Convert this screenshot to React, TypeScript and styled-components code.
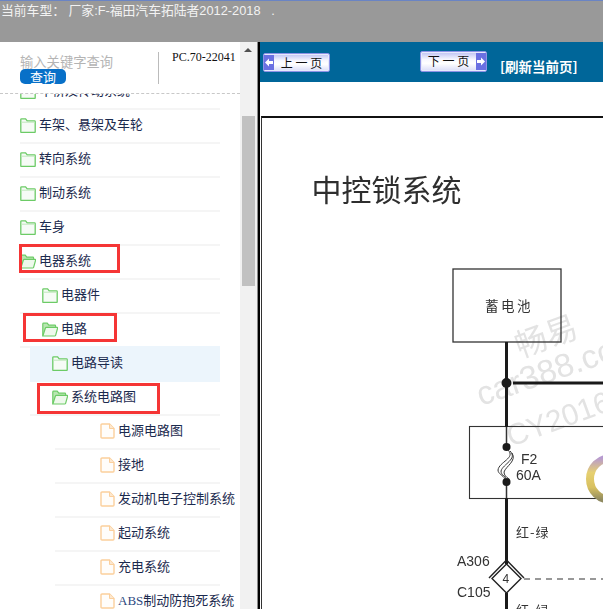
import React from "react";
import styled, { createGlobalStyle } from "styled-components";

const CJK = `"Noto Sans CJK SC", "Liberation Sans", sans-serif`;

const Global = createGlobalStyle`
  html, body { margin: 0; padding: 0; background: #fff; overflow: hidden; }
  * { box-sizing: border-box; }
`;

const Page = styled.div`
  width: 603px;
  height: 609px;
  display: flex;
  flex-direction: column;
  overflow: hidden;
  font-family: ${CJK};
`;

const TopBar = styled.header`
  flex: 0 0 42px;
  background: #999;
  border-top: 1px solid #6a84c4;
  color: #f2f2f2;
  font-size: 12.8px;
  line-height: 18px;
  padding: 1px 0 0 1px;
  white-space: pre;
  font-family: "Liberation Sans", ${CJK};
`;

const Main = styled.div`
  flex: 1;
  display: flex;
  min-height: 0;
`;

const Side = styled.aside`
  flex: 0 0 240px;
  display: flex;
  flex-direction: column;
  background: #fff;
`;

const SearchPanel = styled.div`
  flex: 0 0 52px;
  display: flex;
  padding: 10px 0 0 20px;
  border-bottom: 1px dashed #c8c8c8;
`;

const SearchCol = styled.div`
  width: 138px;
  padding-top: 2px;
  display: flex;
  flex-direction: column;
  align-items: flex-start;
`;

const Placeholder = styled.div`
  font-size: 13.3px;
  line-height: 15px;
  color: #b4b4b4;
`;

const SearchBtn = styled.button`
  width: 46px;
  height: 15px;
  padding: 0;
  border: 0;
  border-radius: 5px;
  background: #0870c8;
  color: #fff;
  font: 13px/15px ${CJK};
`;

const Code = styled.div`
  width: 78px;
  height: 32px;
  border-left: 1px solid #bbb;
  padding-left: 13px;
  font: 12px/11px "Liberation Serif", serif;
  color: #111;
  white-space: nowrap;
`;

const TreeViewport = styled.div`
  flex: 1;
  overflow: hidden;
  min-height: 0;
`;

const Tree = styled.ul`
  list-style: none;
  margin: -18px 0 0 20px;
  padding: 0;
  width: 200px;
`;

const Row = styled.li<{ $inset: number; $iconAt: number; $active?: boolean }>`
  position: relative;
  height: 34px;
  margin-left: ${(p) => p.$inset}px;
  padding: 0 0 5px ${(p) => p.$iconAt}px;
  display: flex;
  align-items: center;
  gap: 3px;
  border-bottom: 2px solid ${(p) => (p.$active ? "#ecf5fc" : "#f5f5f5")};
  background: ${(p) => (p.$active ? "#ecf5fc" : "transparent")};
  box-shadow: ${(p) => (p.$active ? "0 -2px 0 #ecf5fc" : "none")};
  color: #1b2a4e;
  font-size: 13px;
  white-space: nowrap;

  & > svg {
    margin-top: 3px;
  }
`;

const Latin = styled.span`
  font-family: "Liberation Serif", serif;
  color: #2d4a80;
`;

const RowLabel = styled.span`
  display: block;
`;

const Mark = styled.span<{ $x: number; $y: number; $w: number; $h: number }>`
  position: absolute;
  left: ${(p) => p.$x}px;
  top: ${(p) => p.$y}px;
  width: ${(p) => p.$w}px;
  height: ${(p) => p.$h}px;
  border: 3px solid #f53535;
  pointer-events: none;
`;

const ScrollTrack = styled.div`
  flex: 0 0 16px;
  background: #f1f1f1;
  display: flex;
  flex-direction: column;
  align-items: center;
  padding-top: 6px;
`;

const ScrollArrow = styled.div`
  width: 0;
  height: 0;
  border-left: 4px solid transparent;
  border-right: 4px solid transparent;
  border-bottom: 4px solid #505050;
`;

const ScrollThumb = styled.div`
  width: 13px;
  height: 170px;
  margin-top: 64px;
  margin-left: 1px;
  background: #c1c1c1;
`;

const Split = styled.div`
  flex: 0 0 4px;
  background: linear-gradient(to right, #f1f1f1 0 1px, #8a8a8a 1px 2px, #000 2px);
`;

const Reader = styled.section`
  flex: 1;
  min-width: 0;
  display: flex;
  flex-direction: column;
`;

const Toolbar = styled.div`
  flex: 0 0 40px;
  background: #006699;
  display: flex;
  align-items: flex-start;
  padding-left: 3px;
`;

const PageBtn = styled.button<{ $top: number; $gap: number; $next?: boolean }>`
  width: 67px;
  height: ${(p) => (p.$next ? 21 : 19)}px;
  margin: ${(p) => p.$top}px 0 0 ${(p) => p.$gap}px;
  padding: 0;
  display: flex;
  flex-direction: ${(p) => (p.$next ? "row-reverse" : "row")};
  align-items: stretch;
  border: 1px solid #8d92e6;
  border-radius: 2px;
  background: linear-gradient(to bottom, #bcc0f2, #f8f8ff 40%, #fff 60%, #d9dcf8);
  box-shadow: inset 0 0 0 1px #e8e9fb;
  overflow: hidden;
  cursor: default;
`;

const BtnCap = styled.span`
  flex: 0 0 10px;
  margin: 1px 0;
  background: #6a70e2;
  display: flex;
  align-items: center;
  justify-content: center;
`;

const BtnLabel = styled.span`
  flex: 1;
  font: 12px/17px ${CJK};
  color: #111;
  text-align: center;
  white-space: pre;
`;

const Refresh = styled.a`
  margin: 16px 0 0 13px;
  font: bold 13.500px/17px ${CJK};
  color: #fff;
  white-space: nowrap;
`;

const Spacer = styled.div`
  flex: 0 0 34px;
  background: #fff;
`;

const DocFrame = styled.div`
  flex: 1;
  min-height: 0;
  margin-left: 1px;
  border-top: 2px solid #111;
  border-left: 1px solid #333;
  background: #fff;
  overflow: hidden;
`;

const Drawing = styled.svg`
  display: block;
  width: 342px;
  height: 491px;
  filter: blur(0.25px);
`;

const FolderClosed = () => (
  <svg width="16" height="15" viewBox="0 0 16 15" style={{ flex: "none" }}>
    <path d="M.8 14V1.6q0-.8.8-.8h4l1.6 2h7.2q.8 0 .8.8V14q0 .4-.8.4H1.6Q.8 14.400.8 14z" fill="#f6fbf6" stroke="#6ccb66" strokeWidth="1.3" />
    <path d="M1 4.200h14" stroke="#bfe8bb" strokeWidth="1" />
  </svg>
);

const FolderOpen = () => (
  <svg width="16" height="15" viewBox="0 0 16 15" style={{ flex: "none" }}>
    <path d="M.8 13.800V2q0-.8.8-.8h3.600l1.600 2h6q.8 0 .8.800v1.400" fill="#b9e6b2" stroke="#6ccb66" strokeWidth="1.2" />
    <path d="M.8 14l2.600-8q.2-.7 1-.7H15q.8 0 .6.800l-2 7.200q-.2.700-1 .7H.8z" fill="#eef9ec" stroke="#6ccb66" strokeWidth="1.2" />
  </svg>
);

const FileIcon = () => (
  <svg width="15" height="16" viewBox="0 0 15 16" style={{ flex: "none" }}>
    <path d="M1 2q0-1 1-1h7.500L14 5.500V14q0 1-1 1H2q-1 0-1-1z" fill="#fffdfa" stroke="#fbcf9c" strokeWidth="1.4" />
    <path d="M9.500 1v4.500H14" fill="#fde8cf" stroke="#fbcf9c" strokeWidth="1" />
  </svg>
);

type Item = {
  label: React.ReactNode;
  inset: number;
  iconAt: number;
  kind: "closed" | "open" | "file";
  active?: boolean;
  mark?: [number, number, number, number];
};

const items: Item[] = [
  { label: "车桥及传动系统", inset: 0, iconAt: 0, kind: "closed" },
  { label: "车架、悬架及车轮", inset: 0, iconAt: 0, kind: "closed" },
  { label: "转向系统", inset: 0, iconAt: 0, kind: "closed" },
  { label: "制动系统", inset: 0, iconAt: 0, kind: "closed" },
  { label: "车身", inset: 0, iconAt: 0, kind: "closed" },
  { label: "电器系统", inset: 0, iconAt: 0, kind: "open", mark: [-1, -2, 101, 29] },
  { label: "电器件", inset: 0, iconAt: 22, kind: "closed" },
  { label: "电路", inset: 0, iconAt: 22, kind: "open", mark: [3, -1, 94, 29] },
  { label: "电路导读", inset: 10, iconAt: 22, kind: "closed", active: true },
  { label: "系统电路图", inset: 10, iconAt: 22, kind: "open", mark: [7, 1, 123, 31] },
  { label: "电源电路图", inset: 35, iconAt: 45, kind: "file" },
  { label: "接地", inset: 35, iconAt: 45, kind: "file" },
  { label: "发动机电子控制系统", inset: 35, iconAt: 45, kind: "file" },
  { label: "起动系统", inset: 35, iconAt: 45, kind: "file" },
  { label: "充电系统", inset: 35, iconAt: 45, kind: "file" },
  { label: <><Latin>ABS</Latin>制动防抱死系统</>, inset: 35, iconAt: 45, kind: "file" },
];

const icons = { closed: FolderClosed, open: FolderOpen, file: FileIcon };

const PrevArrow = () => (
  <svg width="8" height="9" viewBox="0 0 8 9"><path d="M0 4.500L4 .5v2.500h4v3H4v2.500z" fill="#fff" /></svg>
);
const NextArrow = () => (
  <svg width="8" height="9" viewBox="0 0 8 9"><path d="M8 4.500L4 .5v2.500H0v3h4v2.500z" fill="#fff" /></svg>
);

const Circuit = () => (
  <Drawing viewBox="262 118 342 491" fontFamily={CJK}>
    <defs>
      <linearGradient id="ring" x1="0" y1="0" x2="0" y2="1">
        <stop offset="0" stopColor="#b79ad0" />
        <stop offset="0.35" stopColor="#e6d070" />
        <stop offset="0.7" stopColor="#d8c060" />
        <stop offset="1" stopColor="#8f8a60" />
      </linearGradient>
    </defs>

    <text x="311.500" y="201" fontSize="30" fill="#2e2e2e">中控锁系统</text>

    <g fill="#e3e3e3" fontFamily={`"Liberation Sans", ${CJK}`}>
      <text x="520" y="358" fontSize="32" transform="rotate(-20 520 358)">畅易</text>
      <text x="481" y="406" fontSize="33" transform="rotate(-19 481 406)">car388.com</text>
      <text x="511" y="447" fontSize="30" transform="rotate(-20 511 447)">CY2016</text>
    </g>

    <rect x="453" y="269" width="108" height="73" fill="none" stroke="#333" strokeWidth="1.3" />
    <text x="485" y="311" fontSize="13.500" letterSpacing="2.500" fill="#333">蓄电池</text>

    <rect x="469.500" y="426.500" width="150" height="72" fill="none" stroke="#333" strokeWidth="1.1" />

    <path d="M506.500 342V427" stroke="#1a1a1a" strokeWidth="3" />
    <path d="M513 383H604" stroke="#1a1a1a" strokeWidth="3" />
    <circle cx="506.500" cy="383" r="5" fill="#1a1a1a" />
    <path d="M506.500 427V447M506.500 482V498" stroke="#333" strokeWidth="1.500" />
    <circle cx="506.500" cy="447" r="4" fill="#1a1a1a" />
    <circle cx="506.500" cy="482" r="4" fill="#1a1a1a" />
    <g fill="none" stroke="#333" strokeWidth="1">
      <path d="M508 450C516 458 499 462 498 470C498 474 503 475 505 479" />
      <path d="M510 451C518 459 503 464 501 471C501 475 505 476 507 479" />
      <path d="M512 453C517 461 506 466 504 472C504 475 506 477 509 479" />
    </g>
    <path d="M506.500 498V564M506.500 593V610" stroke="#1a1a1a" strokeWidth="3" />

    <text x="516" y="537" fontSize="13" letterSpacing="1" fill="#333">红-绿</text>
    <text x="516" y="615" fontSize="13" letterSpacing="1" fill="#333">红-绿</text>

    <path d="M506.500 564L521 578.500L506.500 593L492 578.500Z" fill="#fff" stroke="#222" strokeWidth="1.400" />
    <path d="M489 578L506.500 560L524 578" fill="none" stroke="#222" strokeWidth="1.400" />
    <path d="M524 579H604" stroke="#333" strokeWidth="1.200" strokeDasharray="6 5" />

    <g fill="#333" fontFamily={`"Liberation Sans", ${CJK}`} fontSize="14">
      <text x="521" y="464">F2</text>
      <text x="516" y="480">60A</text>
      <text x="457" y="566">A306</text>
      <text x="457" y="597">C105</text>
      <text x="502.500" y="583" fontSize="12">4</text>
    </g>

    <circle cx="611" cy="479" r="21" fill="none" stroke="url(#ring)" strokeWidth="8" />
  </Drawing>
);

export default function App() {
  return (
    <Page>
      <Global />
      <TopBar>{"当前车型： 厂家:F-福田汽车拓陆者2012-2018   ."}</TopBar>
      <Main>
        <Side>
          <SearchPanel>
            <SearchCol>
              <Placeholder>输入关键字查询</Placeholder>
              <SearchBtn>查询</SearchBtn>
            </SearchCol>
            <Code>PC.70-22041</Code>
          </SearchPanel>
          <TreeViewport>
            <Tree>
              {items.map((it, i) => {
                const Icon = icons[it.kind];
                return (
                  <Row key={i} $inset={it.inset} $iconAt={it.iconAt} $active={it.active}>
                    <Icon />
                    <RowLabel>{it.label}</RowLabel>
                    {it.mark && <Mark $x={it.mark[0]} $y={it.mark[1]} $w={it.mark[2]} $h={it.mark[3]} />}
                  </Row>
                );
              })}
            </Tree>
          </TreeViewport>
        </Side>
        <ScrollTrack>
          <ScrollArrow />
          <ScrollThumb />
        </ScrollTrack>
        <Split />
        <Reader>
          <Toolbar>
            <PageBtn $top={11} $gap={0}>
              <BtnCap><PrevArrow /></BtnCap>
              <BtnLabel>{"上 一 页"}</BtnLabel>
            </PageBtn>
            <PageBtn $top={9} $gap={90} $next>
              <BtnCap><NextArrow /></BtnCap>
              <BtnLabel>{"下 一 页"}</BtnLabel>
            </PageBtn>
            <Refresh>[刷新当前页]</Refresh>
          </Toolbar>
          <Spacer />
          <DocFrame>
            <Circuit />
          </DocFrame>
        </Reader>
      </Main>
    </Page>
  );
}
